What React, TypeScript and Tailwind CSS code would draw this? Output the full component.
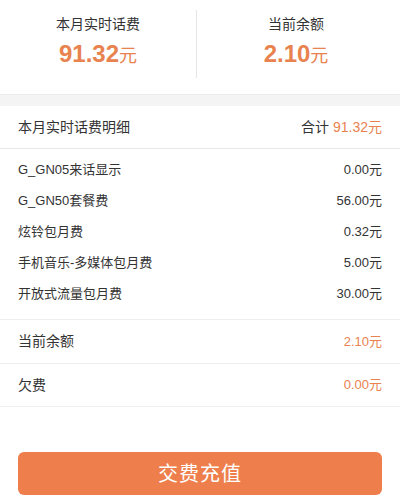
import React from "react";

const font = { fontFamily: '"Liberation Sans", "Noto Sans CJK SC", sans-serif' };

const items: [string, string][] = [
  ["G_GN05来话显示", "0.00元"],
  ["G_GN50套餐费", "56.00元"],
  ["炫铃包月费", "0.32元"],
  ["手机音乐-多媒体包月费", "5.00元"],
  ["开放式流量包月费", "30.00元"],
];

function Summary({ title, value, className }: { title: string; value: string; className: string }) {
  return (
    <div className={`flex flex-col items-center pt-[14px] ${className}`}>
      <div className="text-[14px] leading-[20px] text-[#333]">{title}</div>
      <div className="mt-[5px] leading-[30px] text-[#e8834f] font-bold">
        <span className="text-[24px]">{value}</span>
        <span className="text-[18px] font-normal">元</span>
      </div>
    </div>
  );
}

export default function App() {
  return (
    <div className="w-[400px] h-[500px] bg-white overflow-hidden" style={font}>
      <div className="flex h-[94px]">
        <Summary title="本月实时话费" value="91.32" className="w-[196px]" />
        <div className="w-px h-[68px] mt-[10px] bg-[#e6e6e6]" />
        <Summary title="当前余额" value="2.10" className="w-[198px]" />
      </div>
      <div className="h-[12px] bg-[#f4f4f4] border-t border-[#ececec]" />
      <div className="flex items-center justify-between h-[43px] px-[18px] border-b border-[#e8e8e8] text-[14px] text-[#333]">
        <span>本月实时话费明细</span>
        <span>
          合计 <span className="text-[#e8834f]">91.32元</span>
        </span>
      </div>
      <div className="pt-[5px] pb-[10px] border-b border-[#eeeeee]">
        {items.map(([k, v]) => (
          <div key={k} className="flex items-center justify-between h-[31px] px-[18px] text-[13px] text-[#333]">
            <span>{k}</span>
            <span>{v}</span>
          </div>
        ))}
      </div>
      <div className="flex items-center justify-between h-[44px] px-[18px] border-b border-[#eeeeee] text-[14px]">
        <span className="text-[#333]">当前余额</span>
        <span className="text-[13px] text-[#e8834f]">2.10元</span>
      </div>
      <div className="flex items-center justify-between h-[43px] px-[18px] border-b border-[#eeeeee] text-[14px]">
        <span className="text-[#333]">欠费</span>
        <span className="text-[13px] text-[#e8834f]">0.00元</span>
      </div>
      <div className="px-[18px] pt-[45px]">
        <button className="w-full h-[43px] rounded-[6px] bg-[#ee7f4d] text-white text-[20px] tracking-[1px]">
          交费充值
        </button>
      </div>
    </div>
  );
}
